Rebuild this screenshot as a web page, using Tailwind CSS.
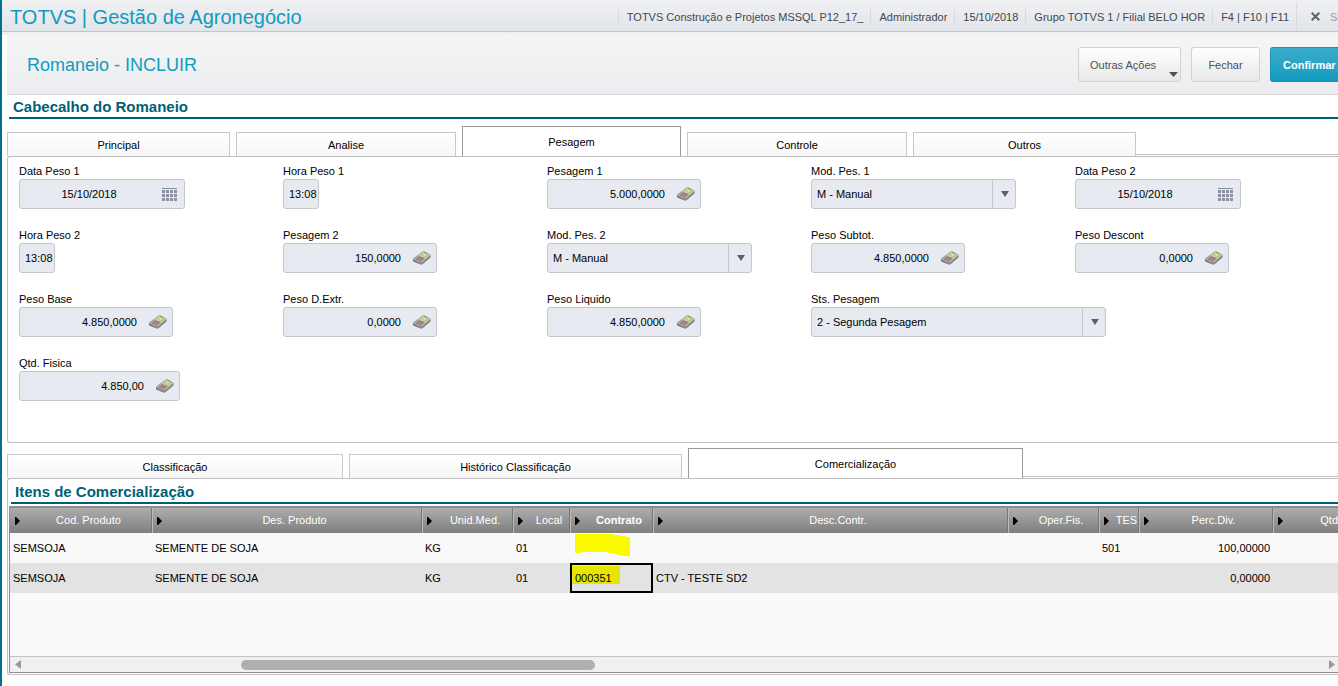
<!DOCTYPE html>
<html lang="pt-BR">

<head>
    <meta charset="UTF-8">
    <meta name="viewport" content="width=device-width, initial-scale=1.0">
    <title>TOTVS | Gestão de Agronegócio</title>
    <script src="https://cdn.jsdelivr.net/npm/@tailwindcss/browser@4"></script>
</head>

<body class="flex min-h-screen flex-col overflow-x-hidden border-l-2 border-[#00708c] bg-white pb-[11px] font-['Liberation_Sans',Arial,sans-serif] text-[11px] leading-[14px] text-black">

    <!-- icons -->
    <svg class="hidden">
        <symbol id="calendar" viewBox="0 0 15 13">
            <path fill="#8b919e" d="M0 0h15v1H0zM0 2h3v3H0zM4 2h3v3H4zM8 2h3v3H8zM12 2h3v3h-3zM0 6h3v3H0zM4 6h3v3H4zM8 6h3v3H8zM12 6h3v3h-3zM0 10h3v3H0zM4 10h3v3H4zM8 10h3v3H8zM12 10h3v3h-3z" />
        </symbol>
        <symbol id="calc" viewBox="0 0 18 14">
            <path fill="#77716b" d="M0 8.5 1 7 10 .5h1.500L17.500 4v2.500L9 13.500H7.500L0 10.500z" />
            <path fill="#c9c5c0" d="M.5 8 10.200.8 17.300 4.200 8.500 11.500z" />
            <path fill="#8f7d71" d="M2 8 6 5 12 7.300 8.200 10.500z" />
            <path fill="#a5d85c" d="M8 3.800 11 1.600 15.500 4 13 6.200z" />
            <path fill="#d8f3a8" d="M9.500 3.500 11 2.500 13.500 3.800 12.500 4.700z" />
            <path stroke="#b5a69a" stroke-width=".4" d="M3.500 6.800 9.500 9.300M4.800 5.900 10.800 8.200M4 9l4-3M6.300 9.800l4-3.200" />
            <path stroke="#a9a39d" stroke-width=".8" fill="none" d="M.6 9.300 8.300 12.500 17 5.500" />
        </symbol>
        <symbol id="down" viewBox="0 0 8 6">
            <path fill="#5b6170" d="M0 0h8L4 6z" />
        </symbol>
        <symbol id="right" viewBox="0 0 5 8">
            <path fill="#000" d="M0 0h1l4 4-4 4H0z" />
        </symbol>
    </svg>

    <!-- top bar -->
    <header class="flex h-8 items-center overflow-hidden border-b border-[#c0c5cf] bg-linear-to-b from-[#f0f0f2] to-[#e1e5ea] pt-0.5 text-[#434750]">
        <h1 class="flex-1 pl-2 text-[20px] leading-7 whitespace-nowrap text-[#109bc0]">TOTVS | Gestão de Agronegócio</h1>
        <div class="flex items-center whitespace-nowrap">
            <span class="border-l border-[#d8dadc] pr-[7px] pl-2 leading-[18px]">TOTVS Construção e Projetos MSSQL P12_17_</span>
            <span class="border-l border-[#d8dadc] pr-[7px] pl-2 leading-[18px]">Administrador</span>
            <span class="border-l border-[#d8dadc] pr-[7px] pl-2 leading-[18px]">15/10/2018</span>
            <span class="border-l border-[#d8dadc] pr-[7px] pl-2 leading-[18px]">Grupo TOTVS 1 / Filial BELO HOR</span>
            <span class="border-l border-[#d8dadc] pr-[7px] pl-2 leading-[18px]">F4 | F10 | F11</span>
            <button class="flex h-7 w-[42px] items-center overflow-hidden border-l border-[#d8dadc] pl-[14px] text-[#9ba0a8]">
                <svg class="mr-2.5 h-[9px] w-[9px] flex-none" viewBox="0 0 9 9"><path stroke="#5b6170" stroke-width="2" d="M.7.7l7.600 7.600M8.300.7L.7 8.300" /></svg>
                Sair
            </button>
        </div>
    </header>

    <!-- toolbar -->
    <div class="border-t-[3px] border-[#f0f0f2]">
        <div class="ml-[5px] flex h-[60px] items-center overflow-hidden border-b border-[#d3d5d8] bg-linear-to-b from-[#f4f6f5] to-[#ececef]">
            <h2 class="flex-1 pl-5 text-[18px] leading-6 text-[#109bc0]">Romaneio - INCLUIR</h2>
            <div class="flex gap-2.5 text-[#4c505a]">
                <button class="flex h-[35px] w-[103px] items-center justify-between rounded-[3px] border border-[#d0d2d4] bg-linear-to-b from-white to-[#e8e8e9] pr-0.5 pl-[11px]">
                    Outras Ações
                    <svg class="mb-1 h-[5px] w-[9px] self-end" viewBox="0 0 9 5"><path fill="#4c505e" d="M0 0h9L4.500 5z" /></svg>
                </button>
                <button class="h-[35px] w-[69px] rounded-[3px] border border-[#d0d2d4] bg-linear-to-b from-white to-[#e8e8e9]">Fechar</button>
                <button class="h-[35px] w-[68px] overflow-hidden rounded-l-[3px] border-y border-l border-[#1a94b5] bg-linear-to-b from-[#3aaccb] to-[#0f9bbf] pl-3 text-left font-bold whitespace-nowrap text-white">Confirmar</button>
            </div>
        </div>
    </div>

    <h3 class="ml-[7px] border-b-2 border-[#005f78] pt-[3px] pb-px pl-1 text-[15px] leading-[18px] font-bold text-[#005f78]">Cabecalho do Romaneio</h3>

    <!-- weighing tabs -->
    <div class="mt-[7px] ml-[5px] grid grid-cols-[223fr_220fr_219fr_220fr_223fr_196fr] items-end gap-x-1.5">
        <button class="h-6 border border-b-0 border-[#c8c8c8] bg-linear-to-b from-white to-[#f6f6f6]">Principal</button>
        <button class="h-6 border border-b-0 border-[#c8c8c8] bg-linear-to-b from-white to-[#f6f6f6]">Analise</button>
        <button class="h-[30px] border border-b-0 border-[#999] bg-white">Pesagem</button>
        <button class="h-6 border border-b-0 border-[#c8c8c8] bg-linear-to-b from-white to-[#f6f6f6]">Controle</button>
        <button class="h-6 border border-b-0 border-[#c8c8c8] bg-linear-to-b from-white to-[#f6f6f6]">Outros</button>
        <div class="-ml-1.5 h-0.5 border-t border-[#c3c3c3]"></div>
    </div>

    <form class="ml-[5px] rounded-l-[3px] border border-r-0 border-[#bfbfbf] pt-[7px] pb-[41px] pl-[11px]">
        <div class="-mr-px grid grid-cols-5 gap-y-[19px]">
            <div>
                <label for="data1" class="block leading-[15px]">Data Peso 1</label>
                <div class="flex h-[30px] w-[166px] items-center rounded-[3px] border border-[#c3c6ca] bg-[#e7eaf1] pr-[7px]">
                    <input id="data1" value="15/10/2018" class="w-0 flex-1 pr-1 text-center outline-none">
                    <svg class="h-[13px] w-[15px]"><use href="#calendar" /></svg>
                </div>
            </div>
            <div>
                <label for="hora1" class="block leading-[15px]">Hora Peso 1</label>
                <input id="hora1" value="13:08" class="block h-[30px] w-9 rounded-[3px] border border-[#c3c6ca] bg-[#e7eaf1] pl-[5px] outline-none">
            </div>
            <div>
                <label for="pes1" class="block leading-[15px]">Pesagem 1</label>
                <div class="flex h-[30px] w-[154px] items-center rounded-[3px] border border-[#c3c6ca] bg-[#e7eaf1] pr-[5px]">
                    <input id="pes1" value="5.000,0000" class="w-0 flex-1 pr-3 text-right outline-none">
                    <svg class="h-[14px] w-[18px]"><use href="#calc" /></svg>
                </div>
            </div>
            <div>
                <label for="mod1" class="block leading-[15px]">Mod. Pes. 1</label>
                <div class="flex h-[30px] w-[205px] rounded-[3px] border border-[#c3c6ca] bg-[#e7eaf1]">
                    <select id="mod1" class="flex-1 appearance-none pl-[5px] outline-none"><option>M - Manual</option></select>
                    <span class="flex w-[23px] items-center justify-center border-l border-[#c3c6ca] pl-0.5"><svg class="h-[6px] w-[8px]"><use href="#down" /></svg></span>
                </div>
            </div>
            <div>
                <label for="data2" class="block leading-[15px]">Data Peso 2</label>
                <div class="flex h-[30px] w-[166px] items-center rounded-[3px] border border-[#c3c6ca] bg-[#e7eaf1] pr-[7px]">
                    <input id="data2" value="15/10/2018" class="w-0 flex-1 pr-1 text-center outline-none">
                    <svg class="h-[13px] w-[15px]"><use href="#calendar" /></svg>
                </div>
            </div>

            <div>
                <label for="hora2" class="block leading-[15px]">Hora Peso 2</label>
                <input id="hora2" value="13:08" class="block h-[30px] w-9 rounded-[3px] border border-[#c3c6ca] bg-[#e7eaf1] pl-[5px] outline-none">
            </div>
            <div>
                <label for="pes2" class="block leading-[15px]">Pesagem 2</label>
                <div class="flex h-[30px] w-[154px] items-center rounded-[3px] border border-[#c3c6ca] bg-[#e7eaf1] pr-[5px]">
                    <input id="pes2" value="150,0000" class="w-0 flex-1 pr-3 text-right outline-none">
                    <svg class="h-[14px] w-[18px]"><use href="#calc" /></svg>
                </div>
            </div>
            <div>
                <label for="mod2" class="block leading-[15px]">Mod. Pes. 2</label>
                <div class="flex h-[30px] w-[205px] rounded-[3px] border border-[#c3c6ca] bg-[#e7eaf1]">
                    <select id="mod2" class="flex-1 appearance-none pl-[5px] outline-none"><option>M - Manual</option></select>
                    <span class="flex w-[23px] items-center justify-center border-l border-[#c3c6ca] pl-0.5"><svg class="h-[6px] w-[8px]"><use href="#down" /></svg></span>
                </div>
            </div>
            <div>
                <label for="subtot" class="block leading-[15px]">Peso Subtot.</label>
                <div class="flex h-[30px] w-[154px] items-center rounded-[3px] border border-[#c3c6ca] bg-[#e7eaf1] pr-[5px]">
                    <input id="subtot" value="4.850,0000" class="w-0 flex-1 pr-3 text-right outline-none">
                    <svg class="h-[14px] w-[18px]"><use href="#calc" /></svg>
                </div>
            </div>
            <div>
                <label for="descont" class="block leading-[15px]">Peso Descont</label>
                <div class="flex h-[30px] w-[154px] items-center rounded-[3px] border border-[#c3c6ca] bg-[#e7eaf1] pr-[5px]">
                    <input id="descont" value="0,0000" class="w-0 flex-1 pr-3 text-right outline-none">
                    <svg class="h-[14px] w-[18px]"><use href="#calc" /></svg>
                </div>
            </div>

            <div>
                <label for="base" class="block leading-[15px]">Peso Base</label>
                <div class="flex h-[30px] w-[154px] items-center rounded-[3px] border border-[#c3c6ca] bg-[#e7eaf1] pr-[5px]">
                    <input id="base" value="4.850,0000" class="w-0 flex-1 pr-3 text-right outline-none">
                    <svg class="h-[14px] w-[18px]"><use href="#calc" /></svg>
                </div>
            </div>
            <div>
                <label for="extra" class="block leading-[15px]">Peso D.Extr.</label>
                <div class="flex h-[30px] w-[154px] items-center rounded-[3px] border border-[#c3c6ca] bg-[#e7eaf1] pr-[5px]">
                    <input id="extra" value="0,0000" class="w-0 flex-1 pr-3 text-right outline-none">
                    <svg class="h-[14px] w-[18px]"><use href="#calc" /></svg>
                </div>
            </div>
            <div>
                <label for="liquido" class="block leading-[15px]">Peso Liquido</label>
                <div class="flex h-[30px] w-[154px] items-center rounded-[3px] border border-[#c3c6ca] bg-[#e7eaf1] pr-[5px]">
                    <input id="liquido" value="4.850,0000" class="w-0 flex-1 pr-3 text-right outline-none">
                    <svg class="h-[14px] w-[18px]"><use href="#calc" /></svg>
                </div>
            </div>
            <div class="col-span-2">
                <label for="sts" class="block leading-[15px]">Sts. Pesagem</label>
                <div class="flex h-[30px] w-[295px] rounded-[3px] border border-[#c3c6ca] bg-[#e7eaf1]">
                    <select id="sts" class="flex-1 appearance-none pl-[5px] outline-none"><option>2 - Segunda Pesagem</option></select>
                    <span class="flex w-[23px] items-center justify-center border-l border-[#c3c6ca] pl-0.5"><svg class="h-[6px] w-[8px]"><use href="#down" /></svg></span>
                </div>
            </div>

            <div>
                <label for="fisica" class="block leading-[15px]">Qtd. Fisica</label>
                <div class="flex h-[30px] w-[161px] items-center rounded-[3px] border border-[#c3c6ca] bg-[#e7eaf1] pr-[5px]">
                    <input id="fisica" value="4.850,00" class="w-0 flex-1 pr-3 text-right outline-none">
                    <svg class="h-[14px] w-[18px]"><use href="#calc" /></svg>
                </div>
            </div>
        </div>
    </form>

    <!-- item tabs -->
    <div class="mt-[5px] ml-[5px] grid grid-cols-[336fr_333fr_335fr_309fr] items-end gap-x-1.5">
        <button class="h-6 border border-b-0 border-[#c8c8c8] bg-linear-to-b from-white to-[#f6f6f6]">Classificação</button>
        <button class="h-6 border border-b-0 border-[#c8c8c8] bg-linear-to-b from-white to-[#f6f6f6]">Histórico Classificação</button>
        <button class="h-[30px] border border-b-0 border-[#999] bg-white">Comercialização</button>
        <div class="-ml-1.5 h-0.5 border-t border-[#c3c3c3]"></div>
    </div>

    <section class="ml-[5px] flex flex-1 flex-col rounded-l-[3px] border border-r-0 border-[#bfbfbf] pt-1 pb-px pl-px">
        <h3 class="ml-0.5 border-b-2 border-[#005f78] pb-px pl-1 text-[15px] leading-[18px] font-bold text-[#005f78]">Itens de Comercialização</h3>
        <div class="mt-0.5 flex flex-1 flex-col overflow-hidden border border-t-2 border-r-0 border-[#8e8e8e] bg-[#f9f9f9]">
            <div class="flex-1">
                <table class="w-full table-fixed border-collapse whitespace-nowrap">
                    <colgroup>
                        <col class="w-[142px]">
                        <col class="w-[270px]">
                        <col class="w-[91px]">
                        <col class="w-[57px]">
                        <col class="w-[83px]">
                        <col class="w-[355px]">
                        <col class="w-[91px]">
                        <col class="w-[40px]">
                        <col class="w-[134px]">
                        <col>
                    </colgroup>
                    <thead class="bg-linear-to-b from-[#adadad] to-[#7f7f7f] text-white">
                        <tr class="h-[25px]">
                            <th class="p-0 font-normal"><div class="flex h-[25px] items-center border-r border-[#777] pl-[5px]"><svg class="h-2 w-[5px]"><use href="#right" /></svg><span class="flex-1 pb-0.5 pl-1.5">Cod. Produto</span></div></th>
                            <th class="p-0 font-normal"><div class="flex h-[25px] items-center border-x border-r-[#777] border-l-[#bbb] pl-[4px]"><svg class="h-2 w-[5px]"><use href="#right" /></svg><span class="flex-1 pb-0.5 pl-1.5">Des. Produto</span></div></th>
                            <th class="p-0 font-normal"><div class="flex h-[25px] items-center border-x border-r-[#777] border-l-[#bbb] pl-[4px]"><svg class="h-2 w-[5px]"><use href="#right" /></svg><span class="flex-1 pb-0.5 pl-1.5">Unid.Med.</span></div></th>
                            <th class="p-0 font-normal"><div class="flex h-[25px] items-center border-x border-r-[#777] border-l-[#bbb] pl-[4px]"><svg class="h-2 w-[5px]"><use href="#right" /></svg><span class="flex-1 pb-0.5 pl-1.5">Local</span></div></th>
                            <th class="p-0 font-bold"><div class="flex h-[25px] items-center border-x border-r-[#777] border-l-[#bbb] pl-[4px]"><svg class="h-2 w-[5px]"><use href="#right" /></svg><span class="flex-1 pb-0.5 pl-1.5">Contrato</span></div></th>
                            <th class="p-0 font-normal"><div class="flex h-[25px] items-center border-x border-r-[#777] border-l-[#bbb] pl-[4px]"><svg class="h-2 w-[5px]"><use href="#right" /></svg><span class="flex-1 pb-0.5 pl-1.5">Desc.Contr.</span></div></th>
                            <th class="p-0 font-normal"><div class="flex h-[25px] items-center border-x border-r-[#777] border-l-[#bbb] pl-[4px]"><svg class="h-2 w-[5px]"><use href="#right" /></svg><span class="flex-1 pb-0.5 pl-1.5">Oper.Fis.</span></div></th>
                            <th class="p-0 font-normal"><div class="flex h-[25px] items-center border-x border-r-[#777] border-l-[#bbb] pl-[4px]"><svg class="h-2 w-[5px]"><use href="#right" /></svg><span class="flex-1 pb-0.5 pl-1.5">TES</span></div></th>
                            <th class="p-0 font-normal"><div class="flex h-[25px] items-center border-x border-r-[#777] border-l-[#bbb] pl-[4px]"><svg class="h-2 w-[5px]"><use href="#right" /></svg><span class="flex-1 pb-0.5 pl-1.5">Perc.Div.</span></div></th>
                            <th class="p-0 font-normal"><div class="flex h-[25px] items-center border-l border-[#bbb] pl-[4px]"><svg class="h-2 w-[5px]"><use href="#right" /></svg><span class="flex-1 pb-0.5 text-right">Qtd</span></div></th>
                        </tr>
                    </thead>
                    <tbody>
                        <tr class="h-[30px]">
                            <td class="p-0 pl-[3px]">SEMSOJA</td>
                            <td class="p-0 pl-[3px]">SEMENTE DE SOJA</td>
                            <td class="p-0 pl-[3px]">KG</td>
                            <td class="p-0 pl-[3px]">01</td>
                            <td class="p-0 pl-[5px] align-top"><svg class="mt-px block h-[22px] w-[55px]" viewBox="0 0 55 22"><path fill="#fbfb00" d="M0 0h39v1h7v1h5v1h4v19h-7v-1h-6v-1h-4v-1h-5v-1H6v1H0z" /></svg></td>
                            <td></td>
                            <td></td>
                            <td class="p-0 pl-[3px]">501</td>
                            <td class="p-0 pr-[3px] text-right">100,00000</td>
                            <td></td>
                        </tr>
                        <tr class="h-[30px] bg-[#e3e3e3]">
                            <td class="p-0 pl-[3px]">SEMSOJA</td>
                            <td class="p-0 pl-[3px]">SEMENTE DE SOJA</td>
                            <td class="p-0 pl-[3px]">KG</td>
                            <td class="p-0 pl-[3px]">01</td>
                            <td class="p-0">
                                <div class="h-[30px] border-2 border-black pt-px">
                                    <span class="block h-[18px] w-12 bg-[#e6e600] pl-[3px] leading-6">000351</span>
                                </div>
                            </td>
                            <td class="p-0 pl-[3px]">CTV - TESTE SD2</td>
                            <td></td>
                            <td></td>
                            <td class="p-0 pr-[3px] text-right">0,00000</td>
                            <td></td>
                        </tr>
                    </tbody>
                </table>
            </div>

            <!-- horizontal scroll bar -->
            <div class="flex h-4 items-center border-t border-[#c3c3c3] bg-[#f0f0f0] pr-[3px] pl-[5px]">
                <svg class="h-[9px] w-[6px]" viewBox="0 0 6 9"><path fill="#999" d="M6 0v9L0 4.500z" /></svg>
                <div class="flex-1">
                    <div class="h-2.5 rounded-full bg-[#b0b0b0]" style="margin-left: 16.8%; width: 27.1%"></div>
                </div>
                <svg class="h-[9px] w-[6px]" viewBox="0 0 6 9"><path fill="#999" d="M0 0v9l6-4.500z" /></svg>
            </div>
        </div>
    </section>
</body>

</html>
